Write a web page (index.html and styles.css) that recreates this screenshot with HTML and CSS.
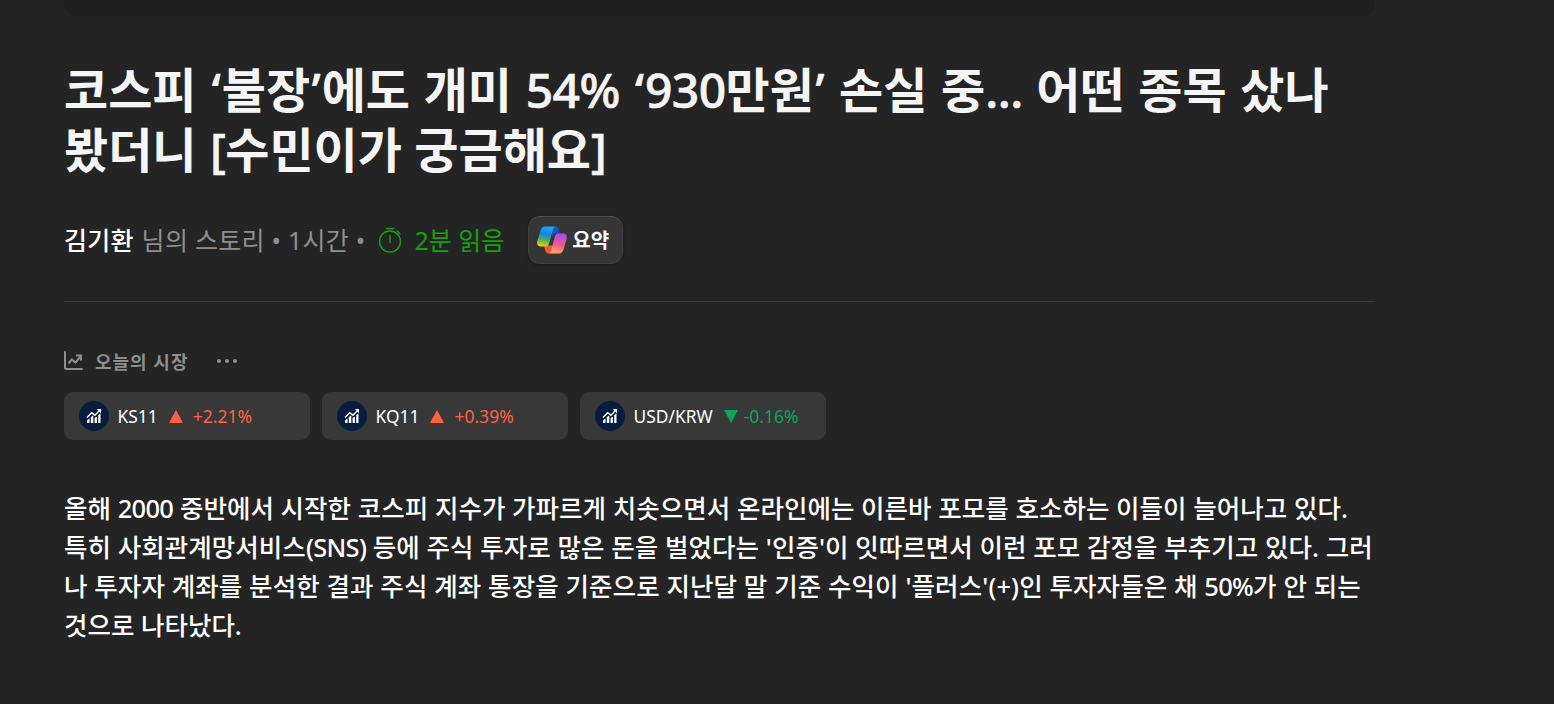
FILE: index.html
```html
<!DOCTYPE html>
<html lang="ko">
<head>
	<meta charset="UTF-8">
	<title>코스피 ‘불장’에도 개미 54% ‘930만원’ 손실 중</title>
	<link rel="stylesheet" href="styles.css">
</head>
<body>
	<svg width="0" height="0" class="defs">
		<symbol id="chart" viewBox="0 0 30 30">
			<circle cx="15" cy="15" r="15" fill="#061d3f"/>
			<path d="M8 19.500l2.500-2.300v4.800H8zM11.800 16l2.500-1.500V22h-2.500zM15.600 16.800l2.300-1V22h-2.300zM19.200 14.200l2.300-2V22h-2.300z" fill="#fff"/>
			<path d="M8 16.500l4.700-4.800 3.200 2.500 5-5" fill="none" stroke="#fff" stroke-width="1.500"/>
			<path d="M17.800 8H22v4.200z" fill="#fff"/>
		</symbol>
	</svg>
	<div class="article">
		<div class="media"></div>
		<h1 class="title">
			<span class="t1">코스피 <b class="q">‘</b>불장<b class="q">’</b>에도 개미 <b>54%</b> <b class="q">‘</b><b>930</b>만원<b class="q">’</b> 손실 중<b>...</b> 어떤 종목 샀나</span>
			<span class="t2">봤더니 <b class="k">[</b>수민이가 궁금해요<b>]</b></span>
		</h1>
		<div class="info">
			<span class="author">김기환</span>
			<span class="story">님의 스토리 • 1시간 •</span>
			<svg class="clock" width="24" height="26" viewBox="0 0 24 26" fill="none" stroke="#13a10e" stroke-width="1.500">
				<circle cx="12" cy="14.500" r="10.500"/>
				<path d="M12 8.500v7M8.300 1.500h7.400M19.300 4.200l2.700 2.500" stroke-linecap="round"/>
			</svg>
			<span class="read">2분 읽음</span>
			<button class="summary">
				<svg width="30" height="28" viewBox="0 0 30 28">
					<defs>
						<linearGradient id="g1" x1="0.5" y1="0" x2="0.3" y2="1">
							<stop offset="0" stop-color="#1ba8f3"/>
							<stop offset=".4" stop-color="#1684d8"/>
							<stop offset=".7" stop-color="#58b74f"/>
							<stop offset="1" stop-color="#f5d000"/>
						</linearGradient>
						<linearGradient id="g2" x1="0.6" y1="0" x2="0.4" y2="1">
							<stop offset="0" stop-color="#a34fe8"/>
							<stop offset=".5" stop-color="#ee5596"/>
							<stop offset="1" stop-color="#ffa95c"/>
						</linearGradient>
						<linearGradient id="g3" x1="0" y1="0" x2="1" y2="1">
							<stop offset="0" stop-color="#0d6fd8"/>
							<stop offset="1" stop-color="#2438b8"/>
						</linearGradient>
					</defs>
					<path d="M14 .5h4.500c2 0 2.800 1.200 3.300 3l1.200 4h-4c-2 0-3 1-3.700 3z" fill="url(#g3)"/>
					<path d="M16 19.500l-1.500 6c-.5 1.500-1.500 2-3 2-2 0-2.600-1-3.200-3L7 19.500z" fill="#f9573b"/>
					<path d="M18.500.500H8C5.500.500 4 2.500 3.200 5.500L.5 14.500C-.500 18.500.500 20.500 4 20.500h4.500c2 0 3-1 3.600-3L15.500 5c.7-2.500 1.300-4.500 3-4.500z" fill="url(#g1)"/>
					<path d="M11.500 27.500H22c2.500 0 4-2 4.800-5l2.700-9C30.500 9.500 29.500 7.500 26 7.500h-4.500c-2 0-3 1-3.600 3L14.500 23c-.7 2.500-1.300 4.500-3 4.500z" fill="url(#g2)"/>
				</svg>
				<span>요약</span>
			</button>
		</div>
		<div class="market">
			<svg width="19" height="20" viewBox="0 0 19 20" fill="none" stroke="#8f8f8f" stroke-width="2">
				<path d="M1 1v15.500q0 1.500 1.500 1.500H18" stroke-linecap="round"/>
				<path d="M4.500 12.500l3.300-4 3.700 3 5-6"/>
				<path d="M12 4.500h5v5"/>
			</svg>
			<span class="today">오늘의 시장</span>
			<svg class="more" width="20" height="4" viewBox="0 0 20 4" fill="#8f8f8f">
				<circle cx="2" cy="2" r="2"/>
				<circle cx="10" cy="2" r="2"/>
				<circle cx="18" cy="2" r="2"/>
			</svg>
		</div>
		<div class="list">
			<div class="item">
				<svg width="30" height="30"><use href="#chart"/></svg>
				<span class="code">KS11</span>
				<i class="up"></i>
				<span class="red">+2.21%</span>
			</div>
			<div class="item">
				<svg width="30" height="30"><use href="#chart"/></svg>
				<span class="code">KQ11</span>
				<i class="up"></i>
				<span class="red">+0.39%</span>
			</div>
			<div class="item usd">
				<svg width="30" height="30"><use href="#chart"/></svg>
				<span class="code">USD/KRW</span>
				<i class="down"></i>
				<span class="green">-0.16%</span>
			</div>
		</div>
		<p class="txt">
			<span class="p1">올해 <b>2000</b> 중반에서 시작한 코스피 지수가 가파르게 치솟으면서 온라인에는 이른바 포모를 호소하는 이들이 늘어나고 있다.</span>
			<span class="p2">특히 사회관계망서비스<b>(SNS)</b> 등에 주식 투자로 많은 돈을 벌었다는 '인증'이 잇따르면서 이런 포모 감정을 부추기고 있다. 그러</span>
			<span class="p3">나 투자자 계좌를 분석한 결과 주식 계좌 통장을 기준으로 지난달 말 기준 수익이 '플러스'(+)인 투자자들은 채 <b>50%</b>가 안 되는</span>
			<span class="p4">것으로 나타났다.</span>
		</p>
	</div>
</body>
</html>
```
FILE: styles.css
```css
*{
	margin: 0;
	padding: 0;
	box-sizing: border-box;
}
body{
	height: 704px;
	background: #242424;
	color: #fff;
	font-family: "Noto Sans","Noto Sans CJK KR",sans-serif;
	overflow: hidden;
}
.defs{
	display: block;
}
.article{
	width: 1311px;
	margin-left: 64px;
}
.media{
	height: 16px;
	background: #1f1f1f;
	border-radius: 0 0 12px 12px;
}
.title{
	margin-top: 44px;
	font-size: 48px;
	font-weight: 600;
	line-height: 60px;
	color: #f5f5f5;
}
.title b{
	font-weight: 500;
	letter-spacing: -.6px;
	-webkit-text-stroke: .6px #f5f5f5;
}
.title .q{
	padding: 0 1.6px;
}
.title .k{
	padding-left: 1px;
}
.t1{
	word-spacing: 1.2px;
}
.title span,.txt span{
	display: block;
	width: max-content;
	white-space: nowrap;
}
.info{
	display: flex;
	align-items: center;
	height: 48px;
	margin-top: 36px;
	font-size: 25px;
	line-height: 36px;
	white-space: nowrap;
}
.author{
	font-weight: 500;
	letter-spacing: .2px;
}
.story{
	margin-left: 8px;
	letter-spacing: .27px;
	color: #8f8f8f;
}
.clock{
	margin-left: 12px;
}
.read{
	margin-left: 13px;
	color: #13a10e;
}
.summary{
	display: flex;
	align-items: center;
	width: 95px;
	height: 48px;
	margin-left: 24px;
	padding: 0 0 2px 8px;
	border: 1px solid #3f3f3f;
	border-top-color: #525252;
	border-radius: 12px;
	background: #363636;
	box-shadow: 0 1px 3px rgba(0,0,0,.3);
	color: #fff;
	font-family: inherit;
	font-size: 20px;
	font-weight: 600;
}
.summary svg{
	position: relative;
	top: 1px;
}
.summary span{
	margin-left: 5px;
}
.market{
	display: flex;
	align-items: center;
	height: 75px;
	margin-top: 37px;
	padding-top: 43px;
	border-top: 1px solid #3b3b3b;
}
.today{
	margin-left: 12px;
	color: #8f8f8f;
	font-size: 18px;
	font-weight: 600;
	letter-spacing: 1px;
}
.more{
	margin-left: 29px;
}
.list{
	display: flex;
	gap: 12px;
	margin-top: 16px;
}
.item{
	display: flex;
	align-items: center;
	width: 246px;
	height: 48px;
	padding-left: 15px;
	border-radius: 9px;
	background: #383838;
	font-size: 17.5px;
}
.code{
	margin-left: 8.5px;
	font-size: 17.4px;
}
.up,.down{
	margin: 1px 10px 0 11px;
	border: 7px solid transparent;
	border-top: 0;
	border-bottom: 13px solid #ff6242;
}
.down{
	margin: 0 6px 0 11px;
	border-bottom: 0;
	border-top: 13px solid #0aa657;
}
.red{
	color: #ff6242;
}
.green{
	color: #0aa657;
}
.txt{
	margin-top: 49px;
	font-size: 25.5px;
	font-weight: 500;
	line-height: 39px;
}
.txt b{
	font-weight: 500;
	letter-spacing: -.7px;
}
.p1{
	letter-spacing: .04px;
}
.p2{
	letter-spacing: .06px;
}
.p3{
	letter-spacing: .1px;
}
```
